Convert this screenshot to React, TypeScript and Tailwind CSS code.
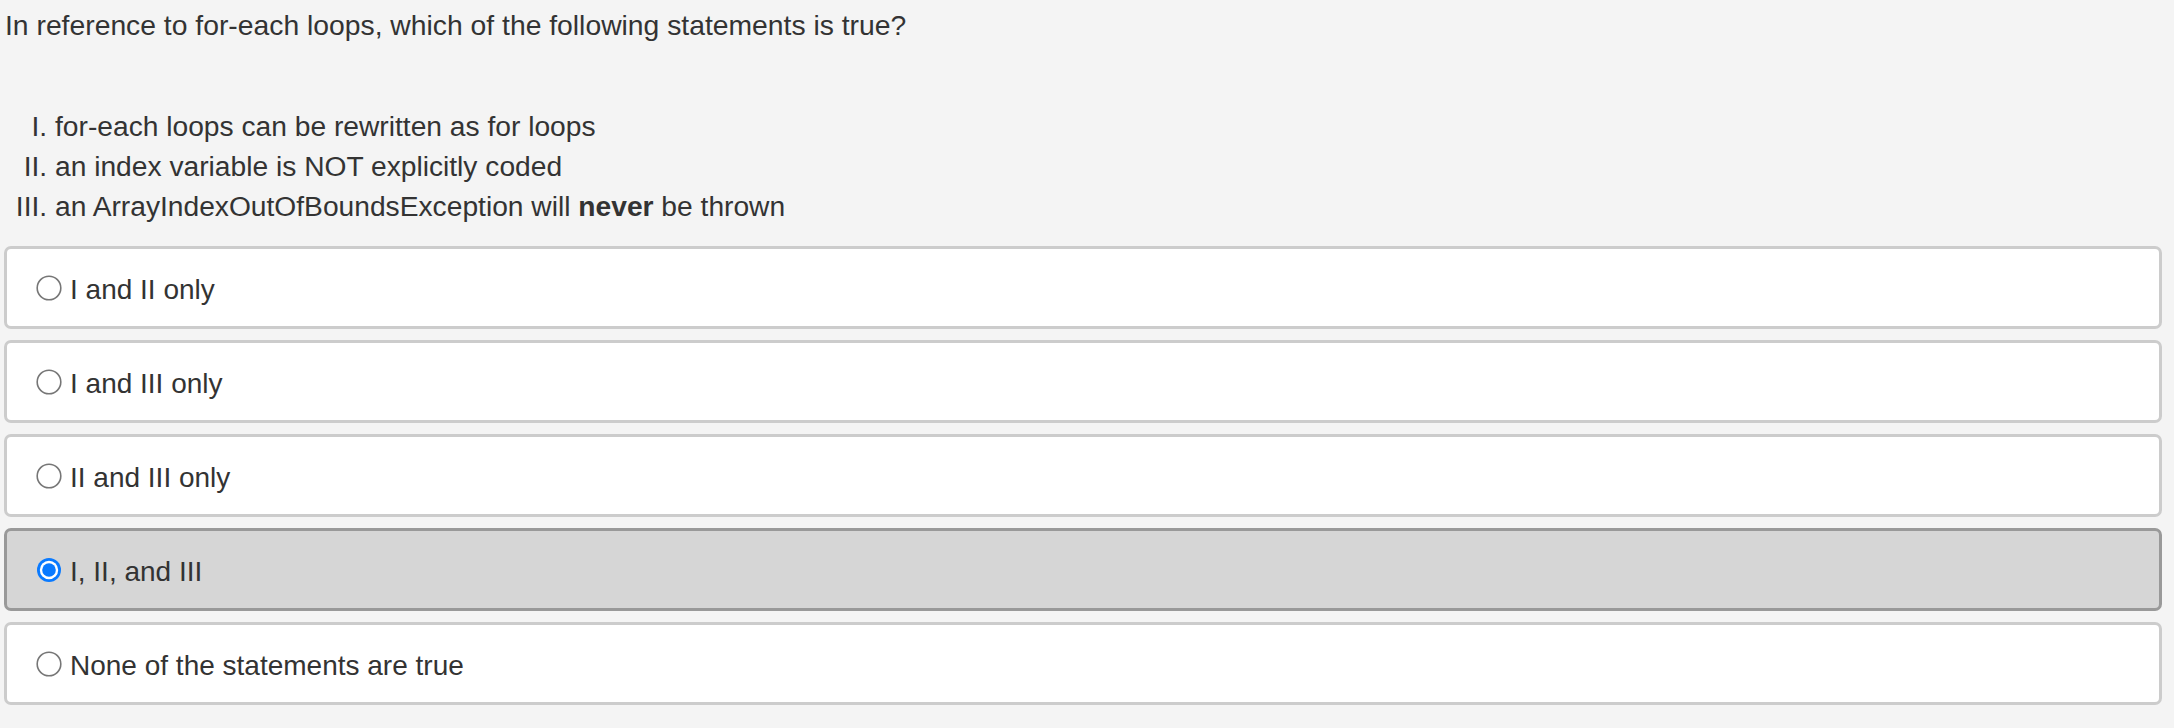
import React, { useState } from 'react';

const opcoes = [
  'I and II only',
  'I and III only',
  'II and III only',
  'I, II, and III',
  'None of the statements are true',
];

function Radio({ checked }: { checked: boolean }) {
  if (checked) {
    return (
      <svg width="26" height="26" viewBox="0 0 26 26" className="shrink-0">
        <circle cx="13" cy="13" r="12" fill="#0a7aff" />
        <circle cx="13" cy="13" r="9.2" fill="#ffffff" />
        <circle cx="13" cy="13" r="6.8" fill="#0a7aff" />
      </svg>
    );
  }
  return (
    <svg width="26" height="26" viewBox="0 0 26 26" className="shrink-0">
      <circle cx="13" cy="13" r="11.8" fill="#ffffff" stroke="#767676" strokeWidth="1.6" />
    </svg>
  );
}

export default function App() {
  const [selecionada, setSelecionada] = useState(3);

  return (
    <div
      className="min-h-screen bg-[#f4f4f4] text-[#333333] text-[28px] leading-[40px] pl-[4px] pr-[12px] pt-[5px]"
      style={{ fontFamily: '"Liberation Sans", Arial, Helvetica, sans-serif' }}
    >
      <p className="pl-[1px] text-[28.3px]">In reference to for-each loops, which of the following statements is true?</p>

      <ol className="list-[upper-roman] pl-[51px] mt-[61px] mb-[20px] text-[28.2px]">
        <li>for-each loops can be rewritten as for loops</li>
        <li>an index variable is NOT explicitly coded</li>
        <li>
          an ArrayIndexOutOfBoundsException will <b>never</b> be thrown
        </li>
      </ol>

      <div className="flex flex-col gap-[11px]">
        {opcoes.map((texto, i) => {
          const ativo = i === selecionada;
          return (
            <label
              key={texto}
              onClick={() => setSelecionada(i)}
              className={
                ativo
                  ? 'flex items-center h-[83px] border-[3px] border-[#999999] bg-[#d6d6d6] rounded-[7px] pl-[29px] cursor-pointer'
                  : 'flex items-center h-[83px] border-[3px] border-[#cccccc] bg-white rounded-[7px] pl-[29px] cursor-pointer'
              }
            >
              <Radio checked={ativo} />
              <span className="ml-[8px] pt-[5px]">{texto}</span>
            </label>
          );
        })}
      </div>
    </div>
  );
}
